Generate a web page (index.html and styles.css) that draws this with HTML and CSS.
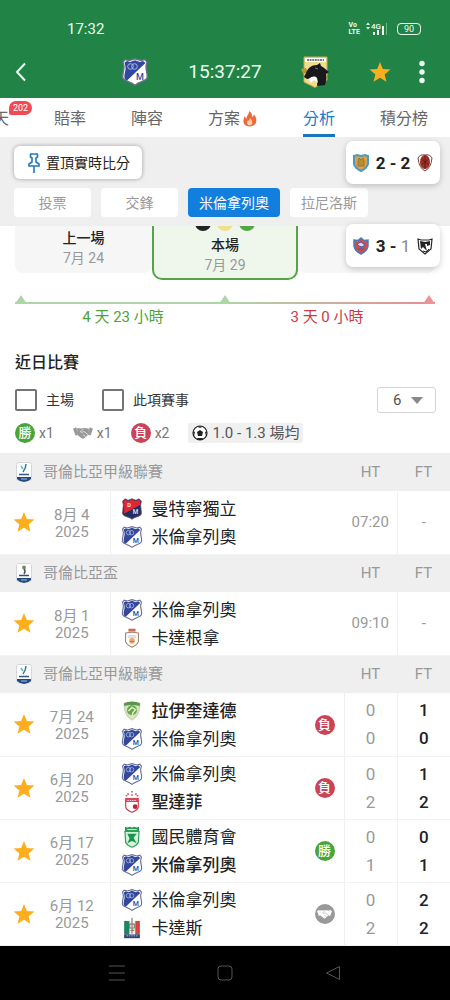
FILE: index.html
```html
<!DOCTYPE html>
<html lang="zh-Hant">
<head>
    <meta charset="UTF-8">
    <meta name="viewport" content="width=device-width, initial-scale=1.0">
    <title>分析</title>
    <link rel="stylesheet" href="styles.css">
</head>
<body>
    <!-- Iconos -->
    <svg class="sprite" aria-hidden="true">
        <symbol id="star" viewBox="0 0 24 24"><path d="M12 1l3.1 7.700 8.300.6-6.400 5.300 2.100 8.100L12 18.200l-7.100 4.500L7 14.600.6 9.300l8.300-.6z" fill="currentColor"/></symbol>
        <symbol id="millonarios" viewBox="0 0 28 28">
            <path d="M2 4l2-2.500 4 1L14 .8l6 1.700 4-1L26 4l-1 4c0 6 2 8 1 12-1 3-7 3.500-12 7.200C9 23.500 3 23 2 20c-1-4 1-6 1-12z" fill="#fff" stroke="#6a6f92" stroke-width="1.400"/>
            <path d="M3.500 4.500L6 3l3 1 5-1.700L19 4l3-1 2.500 2L6 22.500c-3-1-3-4-2-8.500C5 11 4.500 8 3.500 4.500z" fill="#33489d"/>
            <circle cx="9.500" cy="8.500" r="2.800" fill="none" stroke="#a9b6e4"/>
            <circle cx="13.500" cy="8.500" r="2.800" fill="none" stroke="#a9b6e4"/>
            <text x="15" y="22" font-size="9" font-weight="500" fill="#33489d">M</text>
        </symbol>
        <symbol id="llaneros" viewBox="0 0 28 32">
            <path d="M3 1h23v23L14 31.500 3 26z" fill="#eedd8e" stroke="#c5a955"/>
            <path d="M4 2h21v4H4z" fill="#fff"/>
            <path d="M6 4h17" stroke="#555" stroke-width="1.500" stroke-dasharray="2 .6"/>
            <path d="M0 13l5-1 2 4-5 2z" fill="#b99436"/>
            <path d="M5 17c2-5 5-8 11-8l3-2 1 3c4 2 5 4 8 6l-3 2c1 4 0 7-1 11l-8 1c1-4-1-7-5-8l-5 1-3-2z" fill="#17191c"/>
            <path d="M8 23c3-3 6-3 8-1l1 5-4-3-3 3z" fill="#fff"/>
            <path d="M14 12l3 1" stroke="#777"/>
        </symbol>
        <symbol id="medellin" viewBox="0 0 28 28">
            <path d="M2 4l3-3 4 2 5-2 5 2 4-2 3 3-1 5 1 10c0 5-7 4-12 8-5-4-12-3-12-8L3 9z" fill="#202f64" stroke="#555769"/>
            <path d="M3 4l2-2 4 2 5-2 5 2 4-2 2 3-1 4L4 20V9z" fill="#e32634"/>
            <text x="8" y="11" font-size="7" font-weight="500" fill="#fff">D</text>
            <text x="15" y="21" font-size="8" font-weight="500" fill="#dfe4f6">M</text>
        </symbol>
        <symbol id="cartagena" viewBox="0 0 28 28">
            <path d="M5 7q9-2 18 0v12q-1 4-9 8-8-4-9-8z" fill="#fff" stroke="#a38469" stroke-width="1.500"/>
            <path d="M9 1h10v4H9z" fill="#d2685e"/><path d="M8 11h12M8 13h12" stroke="#c4b6a2"/>
            <circle cx="14" cy="18" r="4" fill="#e8a66d"/><path d="M11 19h6" stroke="#b45b4b"/>
        </symbol>
        <symbol id="equidad" viewBox="0 0 28 28">
            <path d="M3 3q11-4 22 0v5q-1 13-11 19Q4 21 3 8z" fill="#d5e2be" stroke="#b1c59a"/>
            <path d="M3 3q11-4 22 0v4q-11-3-22 0z" fill="#58964c"/>
            <circle cx="14" cy="13" r="7" fill="#69a355"/><path d="M9 14l5-5 5 3-4 5-1 6" fill="none" stroke="#e0efba" stroke-width="2"/>
        </symbol>
        <symbol id="santafe" viewBox="0 0 28 28">
            <path d="M6 10h16v10q0 4-8 7-8-3-8-7z" fill="#fff" stroke="#cb394a" stroke-width="1.500"/>
            <path d="M6 9h16v5H6z" fill="#d84555"/><path d="M8 12h12" stroke="#fff" stroke-dasharray="2 1"/>
            <circle cx="18" cy="20" r="3" fill="#bd2438"/>
            <path d="M14 0v2M9 3v2M14 4v2M19 3v2M6 6h2M20 6h2" stroke="#d85160" stroke-width="2"/>
        </symbol>
        <symbol id="nacional" viewBox="0 0 28 28">
            <path d="M5 1l3 1 3-1 3 1 3-1 3 1 3-1v7H5z" fill="#2b9b56"/>
            <path d="M5 7h18l-1 14q-2 4-8 6-6-2-8-6z" fill="#d9f0df" stroke="#2ca158" stroke-width="1.500"/>
            <path d="M8 10h12l-4 5 4 7-6-3-6 3 3-6z" fill="#18984b"/><path d="M8 4.500h12" stroke="#fff"/>
        </symbol>
        <symbol id="caldas" viewBox="0 0 28 28">
            <path d="M4 5h7v17H4z" fill="#238263"/><path d="M18 5h6v17h-6z" fill="#d9423c"/>
            <path d="M4 22h20v5H4z" fill="#304276"/><path d="M11 5h7v17h-7z" fill="#eff1ed"/>
            <path d="M14 1v20M11 9h6v5h-6zM12 17h5" fill="none" stroke="#8a7e70" stroke-width="1.500"/>
            <path d="M7 24h14" stroke="#c9cee4" stroke-dasharray="2 1"/>
        </symbol>
        <symbol id="league" viewBox="0 0 16 20">
            <rect x=".5" y=".5" width="15" height="18" rx="2" fill="#fff" stroke="#d4d7da"/>
            <path d="M5 4l2 3" fill="none" stroke="#65b6b5" stroke-width="1.500"/><path d="M10 2q0 4-3 8" fill="none" stroke="#2f7a98" stroke-width="1.500"/>
            <path d="M3 12.500h10" stroke="#315785" stroke-width="1.500"/>
            <path d="M1 15h14v2q-3 3-7 3t-7-3z" fill="#234a80"/><path d="M5 17h6" stroke="#a8bdd7"/>
        </symbol>
        <symbol id="cup" viewBox="0 0 16 20">
            <rect x=".5" y=".5" width="15" height="18" rx="2" fill="#fff" stroke="#d4d7da"/>
            <circle cx="8" cy="4.500" r="2" fill="#778c68"/><path d="M8 6q2 2 0 5" fill="none" stroke="#45535e" stroke-width="1.500"/>
            <path d="M3 12.500h10" stroke="#3b4c65" stroke-width="1.500"/>
            <path d="M1 15h14v2q-3 3-7 3t-7-3z" fill="#234a80"/><path d="M5 17h6" stroke="#a8bdd7"/>
        </symbol>
        <symbol id="handshake" viewBox="0 0 24 16">
            <path d="M0 3l4-2 2 9-3 1zM24 3l-4-2-2 9 3 1z" fill="currentColor"/>
            <path d="M5 2l5 .5L13 2l6 .5v7L14 14q-2 2-4 0L5 10z" fill="currentColor"/>
            <path d="M12 3.500L9 6.500q2 2 4-.5l5 4M12 10l3 2.500" fill="none" stroke="var(--cut)" stroke-width=".8"/>
        </symbol>
    </svg>

    <header class="top">
        <div class="statusbar">
            <span>17:32</span>
            <div class="signals">
                <span class="volte">Vo<br>LTE</span>
                <svg width="21" height="14" viewBox="0 0 21 14">
                    <path d="M0 3l2-2.500L4 3zM0 5l2 2.500L4 5z" fill="currentColor"/>
                    <text x="5" y="7" font-size="8" font-weight="500" fill="currentColor">4G</text>
                    <path d="M8 13v-3M12 13V8M17 13V4" stroke="currentColor" stroke-width="2"/>
                    <path d="M20.500 13V1" stroke="#6bb886"/>
                </svg>
                <span class="battery">90</span>
            </div>
        </div>
        <div class="matchbar">
            <button class="icon-btn" aria-label="返回"><svg width="12" height="20" viewBox="0 0 12 20"><path d="M10 1.500L2 10l8 8.500" fill="none" stroke="currentColor" stroke-width="2"/></svg></button>
            <div class="clock">
                <svg width="28" height="30"><use href="#millonarios"/></svg>
                <span>15:37:27</span>
                <svg width="28" height="34"><use href="#llaneros"/></svg>
            </div>
            <div class="actions">
                <button class="icon-btn star" aria-label="收藏"><svg width="22" height="22"><use href="#star"/></svg></button>
                <button class="icon-btn" aria-label="更多"><svg width="6" height="24" viewBox="0 0 6 24"><g fill="currentColor"><circle cx="3" cy="3.500" r="2.700"/><circle cx="3" cy="12" r="2.700"/><circle cx="3" cy="20.500" r="2.700"/></g></svg></button>
            </div>
        </div>
    </header>

    <nav class="tabs">
        <a href="#" class="tab">天<span class="count">202</span></a>
        <a href="#" class="tab">賠率</a>
        <a href="#" class="tab">陣容</a>
        <a href="#" class="tab">方案<svg class="flame" width="16" height="16" viewBox="0 0 18 18"><path d="M8 0c4 3 3 5 4 7l1.500-3C18 9 17 17 9 17.500 0 17 1 10 3 6l2 3c0-4 3-5 3-9z" fill="#f0673c"/><path d="M9 8c3 3 4 8 0 8s-4-4-2-6l1 2z" fill="#fbd3a5"/></svg></a>
        <a href="#" class="tab active">分析</a>
        <a href="#" class="tab">積分榜</a>
    </nav>

    <main>
        <section class="panel">
            <button class="pin">
                <svg width="14" height="22" viewBox="0 0 14 22"><path d="M3 2h8M3.500 2v3L5 6v4l-3 2v2h10v-2l-3-2V6l1.500-1V2M7 14v7" fill="none" stroke="#2479bd" stroke-width="1.600"/></svg>
                置頂實時比分
            </button>
            <div class="chips">
                <button class="chip">投票</button>
                <button class="chip">交鋒</button>
                <button class="chip active">米倫拿列奧</button>
                <button class="chip">拉尼洛斯</button>
            </div>
        </section>

        <!-- Marcadores flotantes -->
        <aside class="floating">
            <div class="live">
                <svg width="16" height="18" viewBox="0 0 16 18"><path d="M1 2l3-1 4 1 4-1 3 1v8q-1 4-7 7-6-3-7-7z" fill="#d4a449" stroke="#4a9ac5" stroke-width="2"/><path d="M5 7l1-3 2 2 2-2 1 3v5H5z" fill="#bd8932" stroke="#8a6b30" stroke-width=".7"/></svg>
                <span>2 - 2</span>
                <svg width="16" height="18" viewBox="0 0 16 18"><path d="M1 4q2-4 7-3 5-1 7 3-1 10-7 13Q2 14 1 4z" fill="#fff" stroke="#6c4540"/><ellipse cx="8" cy="8" rx="5" ry="7" fill="#a52e25"/><path d="M8 1v14M4 5l8 6M12 5l-8 6" stroke="#541d1b" stroke-width=".8"/></svg>
            </div>
            <div class="live">
                <svg width="16" height="18" viewBox="0 0 16 18"><path d="M1 3l4 .5L8 1l3 2.500 4-.5v6q-1 5-7 8-6-3-7-8z" fill="#d24a58" stroke="#4380b5" stroke-width="1.500"/><path d="M4 7l4-2 4 3-3 2-3-1zM5 12h6" fill="#d5dcee" stroke="#435c9c"/></svg>
                <span>3 - <span class="dim">1</span></span>
                <svg width="16" height="18" viewBox="0 0 16 18"><path d="M1 2l3 1h8l3-1-1 10-6 5-6-5z" fill="#fff" stroke="#25282b" stroke-width="1.200"/><path d="M3 4l5 1 5-1v4l-3 1V7H8l2 7-4-4-2 2z" fill="#222"/><path d="M6 14l3 1 3-3" fill="none" stroke="#222"/></svg>
            </div>
        </aside>

        <section class="schedule">
            <div class="tile"><strong>上一場</strong><span>7月 24</span></div>
            <div class="tile current">
                <div class="dots"><i class="dot black"></i><i class="dot yellow"></i><i class="dot green"></i></div>
                <strong>本場</strong><span>7月 29</span>
            </div>
            <div class="tile"></div>
        </section>

        <section class="timeline">
            <div class="rail"><i></i><i></i><i class="end"></i></div>
            <div class="gaps">
                <span>4 天 23 小時</span>
                <span class="short">3 天 0 小時</span>
            </div>
        </section>

        <section class="recent">
            <h2>近日比賽</h2>
            <div class="filters">
                <label><input type="checkbox">主場</label>
                <label><input type="checkbox">此項賽事</label>
                <div class="select"><select aria-label="場數"><option>6</option></select></div>
            </div>
            <div class="summary">
                <span class="stat"><b class="result win">勝</b>x1</span>
                <span class="stat"><svg class="shake" width="20" height="14"><use href="#handshake"/></svg>x1</span>
                <span class="stat"><b class="result loss">負</b>x2</span>
                <span class="average">
                    <svg width="16" height="16" viewBox="0 0 16 16"><circle cx="8" cy="8" r="7" fill="#fff" stroke="#222" stroke-width="1.200"/><path d="M8 5l3 2-1 4H6L5 7zM5 1.500h6L8 3zM1 6l2 1-1 4zM15 6l-2 1 1 4zM5 13l1 2h4l1-2z" fill="#222"/></svg>
                    1.0 - 1.3 場均
                </span>
            </div>
        </section>

        <table class="matches">
            <colgroup><col class="c-star"><col class="c-date"><col><col class="c-score"><col class="c-score"></colgroup>
            <tbody>
                <tr class="league">
                    <th colspan="3"><div><svg width="16" height="20"><use href="#league"/></svg>哥倫比亞甲級聯賽</div></th><th>HT</th><th>FT</th>
                </tr>
                <tr class="pending">
                    <td><button class="icon-btn star" aria-label="收藏"><svg width="22" height="22"><use href="#star"/></svg></button></td>
                    <td class="date">8月 4<br>2025</td>
                    <td class="teams"><div class="pair"><div>
                        <p><svg width="22" height="22"><use href="#medellin"/></svg>曼特寧獨立</p>
                        <p><svg width="22" height="22"><use href="#millonarios"/></svg>米倫拿列奧</p>
                    </div></div></td>
                    <td>07:20</td><td>-</td>
                </tr>
                <tr class="league">
                    <th colspan="3"><div><svg width="16" height="20"><use href="#cup"/></svg>哥倫比亞盃</div></th><th>HT</th><th>FT</th>
                </tr>
                <tr class="pending">
                    <td><button class="icon-btn star" aria-label="收藏"><svg width="22" height="22"><use href="#star"/></svg></button></td>
                    <td class="date">8月 1<br>2025</td>
                    <td class="teams"><div class="pair"><div>
                        <p><svg width="22" height="22"><use href="#millonarios"/></svg>米倫拿列奧</p>
                        <p><svg width="22" height="20"><use href="#cartagena"/></svg>卡達根拿</p>
                    </div></div></td>
                    <td>09:10</td><td>-</td>
                </tr>
                <tr class="league">
                    <th colspan="3"><div><svg width="16" height="20"><use href="#league"/></svg>哥倫比亞甲級聯賽</div></th><th>HT</th><th>FT</th>
                </tr>
                <tr>
                    <td><button class="icon-btn star" aria-label="收藏"><svg width="22" height="22"><use href="#star"/></svg></button></td>
                    <td class="date">7月 24<br>2025</td>
                    <td class="teams"><div class="pair"><div>
                        <p class="winner"><svg width="22" height="20"><use href="#equidad"/></svg>拉伊奎達德</p>
                        <p><svg width="22" height="22"><use href="#millonarios"/></svg>米倫拿列奧</p>
                    </div><b class="result loss">負</b></div></td>
                    <td class="score">0<br>0</td><td class="score ft">1<br>0</td>
                </tr>
                <tr>
                    <td><button class="icon-btn star" aria-label="收藏"><svg width="22" height="22"><use href="#star"/></svg></button></td>
                    <td class="date">6月 20<br>2025</td>
                    <td class="teams"><div class="pair"><div>
                        <p><svg width="22" height="22"><use href="#millonarios"/></svg>米倫拿列奧</p>
                        <p class="winner"><svg width="22" height="22"><use href="#santafe"/></svg>聖達菲</p>
                    </div><b class="result loss">負</b></div></td>
                    <td class="score">0<br>2</td><td class="score ft">1<br>2</td>
                </tr>
                <tr>
                    <td><button class="icon-btn star" aria-label="收藏"><svg width="22" height="22"><use href="#star"/></svg></button></td>
                    <td class="date">6月 17<br>2025</td>
                    <td class="teams"><div class="pair"><div>
                        <p><svg width="22" height="22"><use href="#nacional"/></svg>國民體育會</p>
                        <p class="winner"><svg width="22" height="22"><use href="#millonarios"/></svg>米倫拿列奧</p>
                    </div><b class="result win">勝</b></div></td>
                    <td class="score">0<br>1</td><td class="score ft">0<br>1</td>
                </tr>
                <tr>
                    <td><button class="icon-btn star" aria-label="收藏"><svg width="22" height="22"><use href="#star"/></svg></button></td>
                    <td class="date">6月 12<br>2025</td>
                    <td class="teams"><div class="pair"><div>
                        <p><svg width="22" height="22"><use href="#millonarios"/></svg>米倫拿列奧</p>
                        <p><svg width="22" height="22"><use href="#caldas"/></svg>卡達斯</p>
                    </div><b class="result draw"><svg width="15" height="10"><use href="#handshake"/></svg></b></div></td>
                    <td class="score">0<br>2</td><td class="score ft">2<br>2</td>
                </tr>
            </tbody>
        </table>
    </main>

    <footer class="navbar">
        <button class="icon-btn" aria-label="選單"><svg width="16" height="16" viewBox="0 0 16 16"><path d="M0 1h16M0 8h16M0 15h16" stroke="currentColor"/></svg></button>
        <button class="icon-btn" aria-label="主頁"><svg width="16" height="16" viewBox="0 0 16 16"><rect x="1" y="1" width="14" height="14" rx="3" fill="none" stroke="currentColor"/></svg></button>
        <button class="icon-btn" aria-label="上一頁"><svg width="16" height="16" viewBox="0 0 16 16"><path d="M14.500 1.500v13L1.500 8z" fill="none" stroke="currentColor" stroke-linejoin="round"/></svg></button>
    </footer>
</body>
</html>
```
FILE: styles.css
```css
* {
    margin: 0;
    padding: 0;
    box-sizing: border-box;
}

body {
    font-family: Roboto, "Noto Sans CJK TC", sans-serif;
    font-size: 15px;
    line-height: 20px;
    background: #fff;
    color: #222;
    min-height: 100vh;
    display: flex;
    flex-direction: column;
}

button, select {
    font: inherit;
    color: inherit;
}

svg {
    display: block;
    flex: none;
    overflow: visible;
}

.sprite {
    display: none;
}

.icon-btn {
    background: none;
    border: none;
    display: inline-flex;
    vertical-align: middle;
    cursor: pointer;
}

.star {
    color: #fdae1c;
}

/* Cabecera */
.top {
    background: #228347;
    color: #e9fff0;
}

.statusbar {
    display: flex;
    justify-content: space-between;
    align-items: center;
    padding: 19px 29px 3px 67px;
}

.signals {
    display: flex;
    align-items: center;
    gap: 6px;
}

.volte {
    font-size: 7px;
    font-weight: 700;
    line-height: 7px;
}

.battery {
    font-size: 9px;
    line-height: 10px;
    border: 1px solid currentColor;
    border-radius: 4px;
    padding: 0 6px;
    margin-left: 4px;
}

.matchbar {
    display: grid;
    grid-template-columns: 1fr auto 1fr;
    align-items: center;
    height: 56px;
    padding: 4px 25px 0 15px;
}

.matchbar > .icon-btn {
    justify-self: start;
}

.clock {
    display: flex;
    align-items: center;
    gap: 39px;
    font-size: 19px;
    margin-left: 10px;
}

.actions {
    display: flex;
    justify-content: flex-end;
    align-items: center;
    gap: 28px;
}

/* Pestañas */
.tabs {
    display: flex;
    justify-content: flex-end;
    gap: 45px;
    padding-right: 22px;
    overflow: hidden;
}

.tab {
    position: relative;
    display: flex;
    align-items: center;
    flex: none;
    padding-top: 6px;
    border-bottom: 3px solid transparent;
    font-size: 16px;
    line-height: 30px;
    color: #666;
    text-decoration: none;
}

.tab.active {
    color: #1b7bcb;
    border-color: #1b74be;
}

.flame {
    margin-left: 2px;
}

.count {
    position: absolute;
    left: 16px;
    top: 3px;
    padding: 0 4px;
    border-radius: 7px 7px 7px 2px;
    background: #ef4a55;
    color: #fff;
    font-size: 9px;
    line-height: 14px;
}

main {
    position: relative;
    flex: 1;
}

.panel {
    background: #efefef;
    padding: 9px 14px;
}

.pin {
    display: flex;
    align-items: center;
    gap: 5px;
    height: 33px;
    padding: 0 12px 0 13px;
    background: #fff;
    border: none;
    border-radius: 6px;
    box-shadow: 0 0 4px rgba(0,0,0,0.35);
    font-size: 14px;
}

.chips {
    display: flex;
    gap: 10px;
    margin-top: 9px;
}

.chip {
    min-width: 77px;
    height: 29px;
    padding: 0 11px;
    background: #fff;
    border: none;
    border-radius: 4px;
    font-size: 14px;
    color: #999;
}

.chip.active {
    background: #127fdf;
    color: #fff;
}

.floating {
    position: absolute;
    top: 4px;
    right: 10px;
    z-index: 2;
    display: flex;
    flex-direction: column;
    gap: 40px;
}

.live {
    display: flex;
    align-items: center;
    justify-content: space-between;
    width: 94px;
    height: 43px;
    padding: 0 7px;
    background: #fff;
    border-radius: 7px;
    box-shadow: 0 2px 6px rgba(0,0,0,0.2);
    font-size: 17px;
    font-weight: 700;
}

.dim {
    font-weight: 400;
    color: #888;
}

/* Partido anterior, actual y siguiente */
.schedule {
    display: flex;
    align-items: flex-start;
    height: 54px;
    padding: 0 15px;
    overflow: hidden;
}

.tile {
    flex: 1;
    display: flex;
    flex-direction: column;
    align-items: center;
    height: 47px;
    padding-top: 2px;
    background: #f6f6f6;
    border-radius: 0 0 8px 8px;
    font-size: 14px;
    color: #999;
}

.tile strong {
    font-weight: 500;
    color: #222;
}

.tile.current {
    flex: none;
    width: 146px;
    height: 54px;
    padding-top: 0;
    background: #eff7ec;
    border: 2px solid #55a547;
    border-top: none;
    border-radius: 0 0 10px 10px;
}

.dots {
    display: flex;
    gap: 6px;
    margin-top: -11px;
    margin-bottom: 4px;
}

.dot {
    width: 16px;
    height: 16px;
    border-radius: 50%;
}

.black { background: #222; }
.yellow { background: #efe08e; }
.green { background: #55a547; }

.timeline {
    padding: 15px 15px 0;
    font-size: 15px;
}

.rail {
    display: flex;
    justify-content: space-between;
    background: linear-gradient(90deg, #acd6a6 50%, #e98b93) bottom / 100% 2px no-repeat;
}

.rail i {
    border: 6px solid transparent;
    border-top: none;
    border-bottom: 9px solid #acd6a6;
}

.rail .end {
    border-bottom-color: #ee9299;
}

.gaps {
    display: flex;
    padding: 3px 6px 0;
    text-align: center;
    color: #4ba43a;
}

.gaps span {
    flex: 1;
}

.gaps .short {
    color: #cd3847;
}

/* Últimos partidos */
.recent {
    padding: 26px 14px 10px 15px;
    color: #555;
}

h2 {
    font-size: 16px;
    font-weight: 500;
    color: #222;
}

.filters {
    display: flex;
    align-items: center;
    gap: 28px;
    margin-top: 14px;
    font-size: 14px;
}

.filters label {
    display: flex;
    align-items: center;
    gap: 9px;
    color: #333;
}

.filters input {
    appearance: none;
    width: 22px;
    height: 22px;
    border: 2px solid #757575;
    border-radius: 2px;
}

.filters input:checked {
    background: #127fdf;
}

.select {
    display: flex;
    align-items: center;
    margin-left: auto;
    width: 59px;
    height: 26px;
    position: relative;
}

.select select {
    appearance: none;
    width: 100%;
    height: 100%;
    padding-left: 15px;
    background: #fff;
    border: 1px solid #d5d5d5;
    border-radius: 3px;
    font-size: 15px;
}

.select::after {
    content: "";
    position: absolute;
    right: 13px;
    border: 6px solid transparent;
    border-top: 7px solid #888;
    border-bottom: none;
    pointer-events: none;
}

.summary {
    display: flex;
    align-items: center;
    gap: 19px;
    margin-top: 10px;
}

.stat {
    display: flex;
    align-items: center;
    gap: 4px;
    font-size: 14px;
    color: #777;
}

.shake {
    color: #999;
    --cut: #fff;
}

.result {
    flex: none;
    width: 20px;
    height: 20px;
    border-radius: 50%;
    color: #fff;
    font-size: 13px;
    font-weight: 500;
    line-height: 19px;
    text-align: center;
}

.win { background: #4ba43a; }
.loss { background: #cb4357; }

.draw {
    display: flex;
    align-items: center;
    justify-content: center;
    background: #999;
    --cut: #999;
}

.average {
    display: flex;
    align-items: center;
    gap: 4px;
    padding: 0 4px;
    background: #f0f0f0;
    border-radius: 2px;
}

.matches {
    width: 100%;
    table-layout: fixed;
    border-collapse: collapse;
    color: #999;
    text-align: center;
}

.c-star { width: 48px; }
.c-date { width: 62px; }
.c-score { width: 53px; }

.league {
    background: #efefef;
}

.league th {
    height: 38px;
    font-weight: 400;
}

.league div {
    display: flex;
    align-items: center;
    gap: 11px;
    padding-left: 16px;
}

.matches td {
    height: 63px;
    border-bottom: 1px solid #f3f3f3;
}

.matches .date {
    padding: 3px 14px 0 0;
    line-height: 17px;
    white-space: nowrap;
}

.matches .teams,
.matches .score,
.pending td:last-child {
    border-left: 1px solid #f0f0f0;
}

.pair {
    display: flex;
    align-items: center;
    justify-content: space-between;
    padding: 1px 9px 0 10px;
}

.teams p {
    display: flex;
    align-items: center;
    gap: 9px;
    font-size: 17px;
    line-height: 28px;
    color: #222;
}

.teams .winner {
    font-weight: 500;
}

.score {
    font-size: 17px;
    line-height: 28px;
}

.ft {
    font-weight: 500;
    color: #222;
}

/* Barra del sistema */
.navbar {
    display: flex;
    justify-content: center;
    align-items: center;
    gap: 92px;
    height: 55px;
    background: #000;
    color: #555;
}
```
